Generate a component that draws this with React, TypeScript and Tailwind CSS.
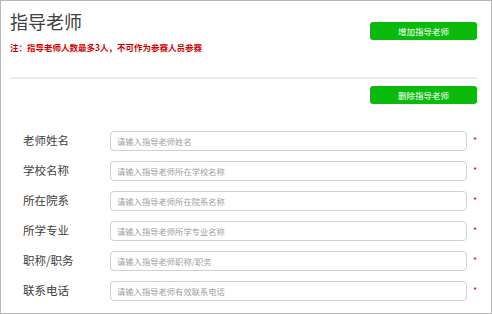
import React from "react"

const fields = [
    { label: "老师姓名", placeholder: "请输入指导老师姓名" },
    { label: "学校名称", placeholder: "请输入指导老师所在学校名称" },
    { label: "所在院系", placeholder: "请输入指导老师所在院系名称" },
    { label: "所学专业", placeholder: "请输入指导老师所学专业名称" },
    { label: "职称/职务", placeholder: "请输入指导老师职称/职务" },
    { label: "联系电话", placeholder: "请输入指导老师有效联系电话" },
]

function GreenButton({ children }: { children: React.ReactNode }) {
    return (
        <button className="w-[107px] h-[18px] rounded-[3px] bg-[#0bbb0b] text-white text-[8.5px] leading-[18px] text-center">
            {children}
        </button>
    )
}

export default function App() {
    return (
        <div
            className="w-[492px] h-[314px] border border-[#b8b8b8] bg-white flex flex-col overflow-hidden"
            style={{ fontFamily: '"Noto Sans CJK SC", "Noto Sans", sans-serif' }}
        >
            {/* header: title, note, add button */}
            <div className="flex justify-between items-start pl-[9px] pr-[14px] pt-[7px]">
                <div className="flex flex-col">
                    <h1 className="text-[18px] leading-[26px] text-[#404040]">指导老师</h1>
                    <p className="mt-[7px] text-[8.5px] leading-[12px] font-bold text-[#d40000]">
                        注：指导老师人数最多3人，不可作为参赛人员参赛
                    </p>
                </div>
                <div className="mt-[8px]">
                    <GreenButton>增加指导老师</GreenButton>
                </div>
            </div>

            <div className="ml-[9px] mr-[14px] mt-[24px] h-[2px] bg-[#ececec]" />

            <div className="flex justify-end mr-[14px] mt-[7px]">
                <GreenButton>删除指导老师</GreenButton>
            </div>

            {/* form rows */}
            <div className="flex flex-col gap-[10px] mt-[27px] pl-[22px]">
                {fields.map((f, i) => (
                    <div key={i} className="flex items-center h-[20px]">
                        <span className="w-[87px] text-[11.5px] text-[#404040]">{f.label}</span>
                        <div className="w-[357px] h-[20px] border border-[#d0d0d0] rounded-[4px] flex items-center pl-[6px]">
                            <span className="text-[8.3px] text-[#a0a0a0]">{f.placeholder}</span>
                        </div>
                        <span className="ml-[6px] text-[9px] text-[#d02020]">*</span>
                    </div>
                ))}
            </div>
        </div>
    )
}
